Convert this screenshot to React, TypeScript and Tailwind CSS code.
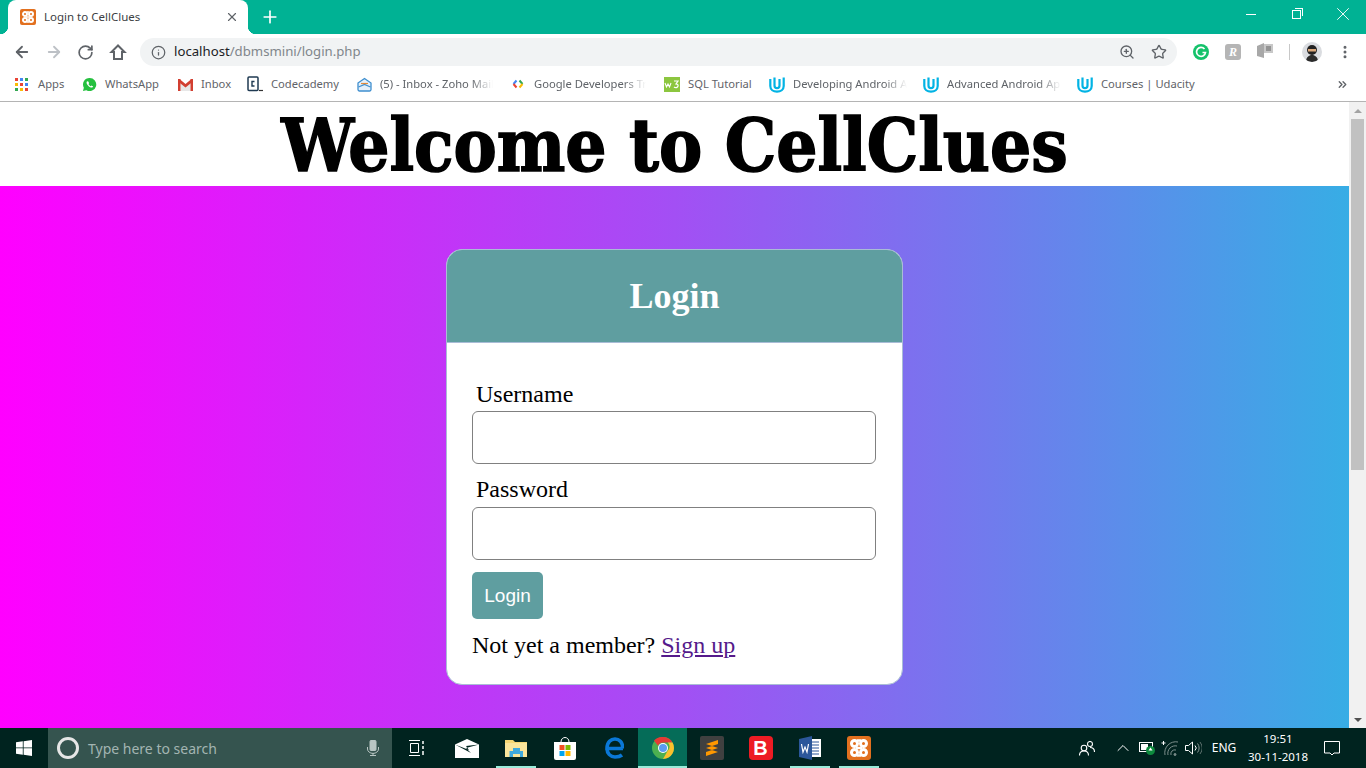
import { ArrowLeft, ArrowRight, RotateCw, Info, ZoomIn, Star, Plus, X, MoreVertical, ChevronsRight, ChevronUp } from "lucide-react";
import type { ReactNode } from "react";

function AppsIcon() {
  const colors = ["bg-[#ea4335]", "bg-[#4285f4]", "bg-[#34a853]", "bg-[#fbbc05]", "bg-[#ea4335]", "bg-[#4285f4]", "bg-[#34a853]", "bg-[#fbbc05]", "bg-[#ea4335]"];
  return (
    <div className="grid grid-cols-3 gap-[2px] w-[13px] h-[13px]">
      {colors.map((c, i) => (
        <div key={i} className={`w-[3px] h-[3px] ${c}`} />
      ))}
    </div>
  );
}

function Whatsapp() {
  return (
    <svg width="15" height="15" viewBox="0 0 16 16">
      <path d="M8 1a7 7 0 0 0-6 10.500L1 15l3.600-1A7 7 0 1 0 8 1z" fill="#25c03f" />
      <path d="M5.600 4.400c-.9.7-1 1.900-.2 3.200 1 1.700 2.300 2.900 4 3.500 1.200.4 2.100-.1 2.500-1.100l-1.800-1-.8.8c-1-.4-1.900-1.300-2.400-2.400l.7-.8-.9-1.900z" fill="#fff" />
    </svg>
  );
}

function Gmail() {
  return (
    <svg width="15" height="13" viewBox="0 0 15 13">
      <path d="M2.500 4.500l5 4 5-4V13h-10z" fill="#e8e8e8" />
      <path d="M0 1h2.500v12H0z" fill="#d23f31" />
      <path d="M12.500 1H15v12h-2.500z" fill="#d23f31" />
      <path d="M0 1h1.500l6 5 6-5H15v2.500L7.500 9.500 0 3.500z" fill="#d23f31" />
    </svg>
  );
}

function Codecademy() {
  return (
    <svg width="16" height="16" viewBox="0 0 16 16">
      <rect x="1" y="1" width="10" height="13.500" rx="1" fill="#fff" stroke="#1f3a52" strokeWidth="1.500" />
      <path d="M7.500 5.500h-2.500v4.500h2.500" fill="none" stroke="#1f3a52" strokeWidth="1.400" />
      <path d="M12 14.500h4" stroke="#333" strokeWidth="1.200" />
    </svg>
  );
}

function Zoho() {
  return (
    <svg width="15" height="15" viewBox="0 0 15 15">
      <path d="M1 6l6.500-4.500L14 6v6.500a1.500 1.500 0 0 1-1.500 1.500h-10A1.500 1.500 0 0 1 1 12.500z" fill="#e4f0fa" stroke="#3f8fcf" strokeWidth="1.300" />
      <path d="M1.500 10l6-2.500 6 2.500" fill="none" stroke="#3f8fcf" strokeWidth="1.300" />
      <path d="M4 6.500h7" stroke="#e28a3a" strokeWidth="1.200" />
    </svg>
  );
}

function GoogleDev() {
  return (
    <svg width="14" height="14" viewBox="0 0 14 14" fill="none" strokeWidth="2">
      <path d="M5.500 3.500L2.500 7" stroke="#4285f4" />
      <path d="M2.500 7l3 3.500" stroke="#ea4335" />
      <path d="M8.500 3.500l3 3.500" stroke="#34a853" />
      <path d="M11.500 7l-3 3.500" stroke="#fbbc05" />
    </svg>
  );
}

function W3() {
  return (
    <svg width="16" height="15" viewBox="0 0 16 15">
      <rect width="16" height="15" fill="#8cc63f" />
      <path d="M1 6l1.500 4 1.500-3 1.500 3 1.500-4" fill="none" stroke="#fff" strokeWidth="1.100" />
      <path d="M10 4h4l-2 3c1.800 0 2.300 1 2 2.200-.3 1.500-2.500 2-4 .8" fill="none" stroke="#fff" strokeWidth="1.200" />
    </svg>
  );
}

function Udacity() {
  return (
    <svg width="16" height="17" viewBox="0 0 16 17" fill="none" stroke="#02b3e4" strokeWidth="2.200">
      <path d="M1.300 3v7c0 3.500 3 5.700 6.700 5.700s6.700-2.200 6.700-5.700V1.500" />
      <path d="M5.500 1.500v8c0 1.600 1 2.700 2.500 2.700s2.500-1.100 2.500-2.700V3" />
    </svg>
  );
}

function Xampp({ size }: { size: number }) {
  return (
    <svg width={size} height={size} viewBox="0 0 24 24">
      <rect width="24" height="24" rx="3" fill="#e2701f" />
      <g fill="none" stroke="#fff" strokeWidth="3">
        <circle cx="7.500" cy="7.500" r="3" />
        <circle cx="16.500" cy="7.500" r="3" />
        <circle cx="7.500" cy="16.500" r="3" />
        <circle cx="16.500" cy="16.500" r="3" />
      </g>
      <path d="M10 4.500h4M10 19.500h4M9 12h6" stroke="#fff" strokeWidth="2.400" />
    </svg>
  );
}

function Bookmark({ icon, label, labelW, iconW, fade }: { icon: ReactNode; label: string; labelW: string; iconW: string; fade?: boolean }) {
  return (
    <div className="flex items-center shrink-0">
      <div className={`flex items-center ${iconW}`}>{icon}</div>
      <span className={`text-[11.200px] text-[#5f6368] whitespace-nowrap ${labelW} ${fade ? "overflow-hidden [mask-image:linear-gradient(to_right,black_80%,transparent)]" : ""}`}>
        {label}
      </span>
    </div>
  );
}

function ChromeTop() {
  return (
    <div className="font-['Noto_Sans',sans-serif]">
      <div className="h-[34px] bg-[#00b294] flex pl-2">
        <div className="relative w-[240px] h-[34px] bg-white rounded-t-lg flex items-center pl-3 pr-[9px]">
          <div className="absolute -left-2 bottom-0 w-2 h-2 bg-[radial-gradient(circle_at_0_0,transparent_8px,white_8.500px)]" />
          <div className="absolute -right-2 bottom-0 w-2 h-2 bg-[radial-gradient(circle_at_100%_0,transparent_8px,white_8.500px)]" />
          <Xampp size={16} />
          <span className="ml-2 text-[11.500px] text-[#3c4043] flex-1">Login to CellClues</span>
          <X size={14} strokeWidth={2} className="text-[#5f6368]" />
        </div>
        <Plus size={20} strokeWidth={2} className="text-white ml-[12px] self-center" />
        <div className="flex-1" />
        <div className="flex items-center self-start h-[28px]">
          <div className="w-[10px] h-px bg-white mr-[36px]" />
          <div className="relative w-[9px] h-[9px] border border-white mr-[31px] mt-[1px]">
            <div className="absolute -top-[3px] -right-[3px] w-[8px] h-[8px] border-t border-r border-white" />
          </div>
          <X size={22} strokeWidth={1} className="text-white mr-[12px]" />
        </div>
      </div>
      <div className="h-[34px] pt-[2px] bg-white flex items-center pl-[13px] pr-[13px]">
        <ArrowLeft size={18} strokeWidth={2.400} className="text-[#5f6368]" />
        <ArrowRight size={18} strokeWidth={2.400} className="text-[#bdc1c6] ml-[14px]" />
        <RotateCw size={17} strokeWidth={2.400} className="text-[#5f6368] ml-[14px]" />
        <svg className="ml-[15px]" width="18" height="18" viewBox="0 0 18 18" fill="none" stroke="#5f6368" strokeWidth="2" strokeLinejoin="miter">
          <path d="M9 2.500L2.500 9H5v7h8V9h2.500z" />
        </svg>
        <div className="ml-[13px] w-[1037px] h-[28px] rounded-full bg-[#f1f3f4] flex items-center pl-[11px] pr-[10px]">
          <Info size={15} strokeWidth={2} className="text-[#5f6368]" />
          <span className="ml-2 text-[13.200px] text-[#202124]">localhost</span>
          <span className="text-[13.200px] text-[#80868b]">/dbmsmini/login.php</span>
          <div className="flex-1" />
          <ZoomIn size={16} strokeWidth={2} className="text-[#5f6368]" />
          <Star size={16} strokeWidth={2} className="text-[#5f6368] ml-[16px]" />
        </div>
        <svg className="ml-[16px]" width="16" height="16" viewBox="0 0 16 16">
          <circle cx="8" cy="8" r="8" fill="#15c26b" />
          <path d="M11.500 5A4.500 4.500 0 1 0 12.500 8.500H9.500" fill="none" stroke="#fff" strokeWidth="1.700" />
        </svg>
        <div className="ml-[16px] w-[16px] h-[16px] rounded-[3px] bg-[#b5b5b5] flex items-center justify-center text-white text-[12px] font-bold italic font-['Liberation_Serif',serif]">
          R
        </div>
        <svg className="ml-[16px] mb-1" width="16" height="15" viewBox="0 0 16 15">
          <path d="M0 3l7-3v15l-7-2z" fill="#a8a8a8" />
          <path d="M7 1h9v9H7z" fill="#c8c8c8" />
          <path d="M9 3h5v5H9z" fill="#949494" />
        </svg>
        <div className="ml-[16px] w-px h-[16px] bg-[#c8c8c8]" />
        <div className="ml-[12px] w-[20px] h-[20px] rounded-full bg-[#dadce0] overflow-hidden">
          <svg width="20" height="20" viewBox="0 0 20 20">
            <path d="M4 20c0-5 3-7 6-7s6 2 6 7z" fill="#2b2b2b" />
            <circle cx="10" cy="8" r="5" fill="#222" />
            <rect x="6" y="7" width="8" height="2.500" fill="#d9a77a" />
          </svg>
        </div>
        <MoreVertical size={16} strokeWidth={2.500} className="text-[#5f6368] ml-[15px]" />
      </div>
      <div className="h-[34px] bg-white border-b border-[#b4b4b4] flex items-center pl-[15px]">
        <Bookmark iconW="w-[23px]" icon={<AppsIcon />} label="Apps" labelW="w-[27px]" />
        <div className="w-[17px]" />
        <Bookmark iconW="w-[23px]" icon={<Whatsapp />} label="WhatsApp" labelW="w-[55px]" />
        <div className="w-[18px]" />
        <Bookmark iconW="w-[23px]" icon={<Gmail />} label="Inbox" labelW="w-[30px]" />
        <div className="w-[16px]" />
        <Bookmark iconW="w-[24px]" icon={<Codecademy />} label="Codecademy" labelW="w-[69px]" />
        <div className="w-[17px]" />
        <Bookmark iconW="w-[23px]" icon={<Zoho />} label="(5) - Inbox - Zoho Mail" labelW="w-[113px]" fade />
        <div className="w-[18px]" />
        <Bookmark iconW="w-[23px]" icon={<GoogleDev />} label="Google Developers Training" labelW="w-[112px]" fade />
        <div className="w-[18px]" />
        <Bookmark iconW="w-[24px]" icon={<W3 />} label="SQL Tutorial" labelW="w-[65px]" />
        <div className="w-[16px]" />
        <Bookmark iconW="w-[24px]" icon={<Udacity />} label="Developing Android Apps" labelW="w-[114px]" fade />
        <div className="w-[16px]" />
        <Bookmark iconW="w-[24px]" icon={<Udacity />} label="Advanced Android Apps" labelW="w-[114px]" fade />
        <div className="w-[16px]" />
        <Bookmark iconW="w-[24px]" icon={<Udacity />} label="Courses | Udacity" labelW="w-[92px]" />
        <div className="flex-1" />
        <ChevronsRight size={13} strokeWidth={2.500} className="text-[#5f6368] mr-[17px]" />
      </div>
    </div>
  );
}

function LoginCard() {
  return (
    <div className="w-[457px] h-[436px] bg-white rounded-[16px] border border-[#a9bcd6] overflow-hidden font-['Liberation_Serif',serif]">
      <div className="h-[93px] bg-[#5f9ea0] border-b border-[#a9bcd6] flex items-center justify-center">
        <h2 className="text-[36px] font-bold text-white">Login</h2>
      </div>
      <div className="pt-[34px] px-[25px] text-black text-[24px]">
        <label className="block pl-1 leading-[34px]">Username</label>
        <div className="h-[53px] w-[404px] rounded-[6px] border border-[#808080]" />
        <label className="block pl-1 leading-[34px] mt-[8px]">Password</label>
        <div className="h-[53px] w-[404px] rounded-[6px] border border-[#808080] mt-[1px]" />
        <button className="mt-[12px] pt-[1px] w-[71px] h-[47px] rounded-[5px] bg-[#5f9ea0] text-white text-[19px] font-['Liberation_Sans',sans-serif]">
          Login
        </button>
        <p className="mt-[9px] leading-[34px]">
          Not yet a member? <a className="text-[#551a8b] underline">Sign up</a>
        </p>
      </div>
    </div>
  );
}

function Scrollbar() {
  return (
    <div className="w-[17px] bg-[#f1f1f1] flex flex-col items-center">
      <div className="h-[17px] flex items-center justify-center">
        <div className="w-0 h-0 border-x-[4px] border-x-transparent border-b-[4px] border-b-[#a3a3a3]" />
      </div>
      <div className="w-[13px] h-[351px] bg-[#c1c1c1]" />
      <div className="flex-1" />
      <div className="h-[17px] flex items-center justify-center">
        <div className="w-0 h-0 border-x-[4px] border-x-transparent border-t-[4px] border-t-[#505050]" />
      </div>
    </div>
  );
}

function ChromeLogo() {
  return (
    <svg width="24" height="24" viewBox="0 0 24 24">
      <circle cx="12" cy="12" r="11" fill="#4caf50" />
      <path d="M12 1a11 11 0 0 1 9.500 5.500H12a5.500 5.500 0 0 0-5 3.200L3 4.500A11 11 0 0 1 12 1z" fill="#e53935" />
      <path d="M21.500 6.500A11 11 0 0 1 12 23l4.700-8.200a5.500 5.500 0 0 0 0-8.300z" fill="#fbc02d" />
      <circle cx="12" cy="12" r="5" fill="#fff" />
      <circle cx="12" cy="12" r="4" fill="#5c9bf0" />
    </svg>
  );
}

function TaskCell({ children, active, running }: { children: ReactNode; active?: boolean; running?: boolean }) {
  return (
    <div className={`relative w-[49px] h-full flex items-center justify-center ${active ? "bg-[#056c58]" : ""}`}>
      {children}
      {running && <div className={`absolute bottom-0 h-[2px] bg-[#99ebd9] ${active ? "inset-x-0" : "left-[5px] right-[4px]"}`} />}
    </div>
  );
}

function Taskbar() {
  return (
    <div className="h-[40px] bg-[#00231f] flex items-center text-white font-['Noto_Sans',sans-serif]">
      <div className="w-[48px] flex items-center justify-center">
        <svg width="16" height="16" viewBox="0 0 16 16" fill="#fff">
          <path d="M0 2.300l6.800-1v6.200H0zM7.600 1.200L16 0v7.500H7.600zM0 8.300h6.800v6.400L0 13.700zM7.600 8.300H16V16l-8.400-1.200z" />
        </svg>
      </div>
      <div className="w-[344px] h-full bg-[#35544f] flex items-center pl-[9px] pr-[13px]">
        <div className="w-[22px] h-[22px] rounded-full border-[3px] border-[#e6e6e6]" />
        <span className="ml-[9px] text-[14px] text-[#a3b5b2] flex-1">Type here to search</span>
        <svg width="12" height="16" viewBox="0 0 12 16" fill="none" stroke="#b8c5c3" strokeWidth="1">
          <rect x="3" y="0.500" width="6" height="10" rx="1" fill="#b8c5c3" />
          <path d="M0.500 7v2a5 4 0 0 0 11 0V7M6 13v2.500M3 15.500h6" />
        </svg>
      </div>
      <div className="w-[50px] flex items-center justify-center">
        <svg width="16" height="16" viewBox="0 0 16 16" fill="none" stroke="#fff" strokeWidth="1">
          <path d="M0 .500h11M0 15.500h11M1.500 3.500h8v9h-8z" />
          <path d="M14 1v3M14 6v3M14 11v4" strokeWidth="1.500" />
        </svg>
      </div>
      <TaskCell>
        <svg width="24" height="19" viewBox="0 0 24 19">
          <path d="M0 5.500L12 0l12 5.500V19H0z" fill="#fff" />
          <path d="M0 5.500L14 11l-3-4 13-1.500-13 3.500 5 5z" fill="#00231f" />
        </svg>
      </TaskCell>
      <TaskCell running>
        <svg width="22" height="19" viewBox="0 0 22 19">
          <path d="M0 1h8l2 2h12v15H0z" fill="#f6d775" />
          <path d="M0 4h22v14H0z" fill="#fbe59b" />
          <path d="M8 9h7v3h3v6h-3v-3H8v3H4.500v-6H8z" fill="#3fa9dd" />
        </svg>
      </TaskCell>
      <TaskCell>
        <svg width="24" height="24" viewBox="0 0 24 24">
          <path d="M8 6c0-6 8-6 8 0" fill="none" stroke="#fff" strokeWidth="1" />
          <path d="M1 6h22v16a2 2 0 0 1-2 2H3a2 2 0 0 1-2-2z" fill="#fff" />
          <rect x="6.500" y="9" width="5" height="5" fill="#f25022" />
          <rect x="12.500" y="9" width="5" height="5" fill="#7fba00" />
          <rect x="6.500" y="15" width="5" height="5" fill="#00a4ef" />
          <rect x="12.500" y="15" width="5" height="5" fill="#ffb900" />
        </svg>
      </TaskCell>
      <TaskCell>
        <svg width="20" height="22" viewBox="0 0 20 22" fill="none" stroke="#0a78d7" strokeWidth="3.600">
          <path d="M19 11.500H3C3 5 7 2 11 2s7.500 3 8 9.500M3 11.500c0 5 3.500 8.500 8 8.500 3 0 5.500-.8 7-2" />
        </svg>
      </TaskCell>
      <TaskCell active running>
        <ChromeLogo />
      </TaskCell>
      <TaskCell>
        <div className="w-[24px] h-[24px] rounded-[2px] bg-[#404040] flex items-center justify-center">
          <svg width="14" height="16" viewBox="0 0 14 16" fill="#ff9800">
            <path d="M13 0v4L1 8V4zM1 8l12 4v-4L1 4zM13 8v4L1 16v-4z" />
          </svg>
        </div>
      </TaskCell>
      <TaskCell>
        <div className="w-[24px] h-[24px] rounded-[4px] bg-[#ed1c24] flex items-center justify-center text-white font-bold text-[20px] font-['Liberation_Sans',sans-serif]">
          B
        </div>
      </TaskCell>
      <TaskCell running>
        <svg width="22" height="24" viewBox="0 0 22 24">
          <rect x="9" y="3" width="13" height="18" fill="#fff" />
          <path d="M11 6h9M11 9h9M11 12h9M11 15h9M11 18h9" stroke="#2b579a" strokeWidth="1" />
          <path d="M0 3l13-3v24L0 21z" fill="#2b579a" />
          <path d="M2.500 8l1.500 8 2-5 2 5 1.500-8" fill="none" stroke="#fff" strokeWidth="1.200" />
        </svg>
      </TaskCell>
      <TaskCell running>
        <Xampp size={24} />
      </TaskCell>
      <div className="flex-1" />
      <div className="w-[36px] flex items-center justify-center">
        <svg width="16" height="15" viewBox="0 0 16 15" fill="none" stroke="#fff" strokeWidth="1.100">
          <circle cx="5" cy="7" r="2.800" />
          <path d="M.500 14.500c0-3 2-4.500 4.500-4.500s4.500 1.500 4.500 4.500" />
          <circle cx="11" cy="3" r="2.500" />
          <path d="M11 6.500c2.500 0 4.500 1.500 4.500 4.500" />
        </svg>
      </div>
      <div className="ml-[4px] w-[28px] flex items-center justify-center">
        <ChevronUp size={20} strokeWidth={1.200} />
      </div>
      <div className="w-[20px] flex items-center justify-center">
        <svg width="16" height="14" viewBox="0 0 16 14">
          <rect x="0.500" y="1.500" width="13" height="9" fill="none" stroke="#fff" />
          <rect x="2" y="3" width="7" height="6" fill="#fff" />
          <circle cx="11.500" cy="9.500" r="4.500" fill="#0d8a3d" />
          <path d="M11.500 6.500l2 3h-4z" fill="#fff" />
        </svg>
      </div>
      <div className="w-[26px] flex items-center justify-center">
        <svg width="18" height="16" viewBox="0 0 18 16" fill="none" stroke="#7d8f8c" strokeWidth="1">
          <path d="M4 15a11 11 0 0 1 13-13M7 15a7.500 7.500 0 0 1 9-9M10 15a4 4 0 0 1 5-5" />
          <path d="M2.500 1v4M.500 3h4" stroke="#fff" />
          <circle cx="14" cy="14.500" r="1" fill="#7d8f8c" />
        </svg>
      </div>
      <div className="w-[20px] flex items-center justify-center">
        <svg width="17" height="14" viewBox="0 0 17 14" fill="none" stroke="#fff" strokeWidth="1">
          <path d="M.500 4.500h3L7.500 1v12L3.500 9.500h-3z" />
          <path d="M10 4.500a3.500 3.500 0 0 1 0 5" />
          <path d="M12.500 2.500a7 7 0 0 1 0 9" stroke="#8a9a97" />
          <path d="M15 1a10 10 0 0 1 0 12" stroke="#5f7370" />
        </svg>
      </div>
      <div className="w-[42px] text-center text-[12px]">ENG</div>
      <div className="w-[66px] text-center text-[11.500px] leading-[18px]">
        <div>19:51</div>
        <div>30-11-2018</div>
      </div>
      <div className="w-[42px] flex items-center justify-center">
        <svg width="16" height="15" viewBox="0 0 16 15" fill="none" stroke="#fff" strokeWidth="1">
          <path d="M.500 .500h15v11.500h-5.500L8 14l-2-2H.500z" />
        </svg>
      </div>
      <div className="w-[13px]" />
    </div>
  );
}

export default function App() {
  return (
    <div className="h-screen flex flex-col overflow-hidden">
      <ChromeTop />
      <div className="flex-1 flex min-h-0">
        <div className="flex-1 flex flex-col">
          <h1 className="h-[84px] text-center text-[72px] leading-[88px] font-bold text-black bg-white font-['DejaVu_Serif_Condensed','DejaVu_Serif',serif] [-webkit-text-stroke:1.500px_black]">
            Welcome to CellClues
          </h1>
          <div className="flex-1 pt-[63px] flex justify-center bg-[linear-gradient(to_right,#ff00ff,#a34ff4,#37ade5)]">
            <LoginCard />
          </div>
        </div>
        <Scrollbar />
      </div>
      <Taskbar />
    </div>
  );
}
